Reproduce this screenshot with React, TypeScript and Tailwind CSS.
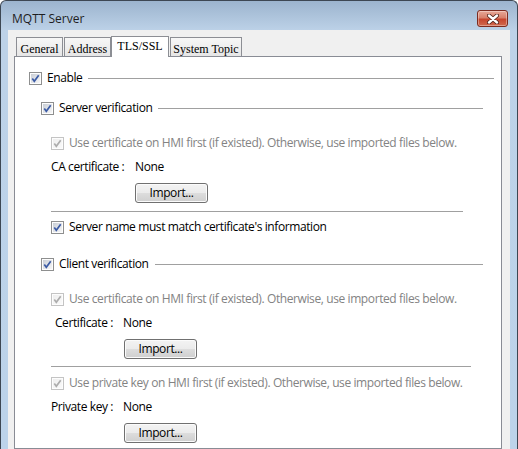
import React from "react";

const UI = "[font-family:'Open_Sans',sans-serif]";
const SERIF = "[font-family:'Liberation_Serif',serif]";

function CheckBox({ disabled = false }: { disabled?: boolean }) {
  const id = disabled ? "cbd" : "cbe";
  return (
    <svg width="13" height="13" viewBox="0 0 13 13" className="shrink-0 block">
      <defs>
        <linearGradient id={id + "g"} x1="0" y1="0" x2="1" y2="1">
          <stop offset="0" stopColor={disabled ? "#eeeeee" : "#c9ced6"} />
          <stop offset="1" stopColor={disabled ? "#fafafa" : "#f7f7f7"} />
        </linearGradient>
      </defs>
      <rect x="0.5" y="0.5" width="12" height="12" fill="#fdfdfd" stroke={disabled ? "#c4c4c4" : "#8e8f8f"} />
      <rect x="2" y="2" width="9" height="9" fill={`url(#${id}g)`} />
      <path
        d="M3.3 6.6 L5.3 9.3 L9.7 3.3"
        fill="none"
        stroke={disabled ? "#acacac" : "#3b5ba5"}
        strokeWidth="1.7"
      />
    </svg>
  );
}

function ImportButton() {
  return (
    <div className="w-[73px] h-[20px] rounded-[3px] border border-[#707070] bg-[linear-gradient(#f3f3f3_0%,#ebebeb_50%,#dddddd_51%,#cfcfcf_100%)] shadow-[inset_0_0_0_1px_#fbfbfb] flex items-center justify-center text-[12px] leading-[16px] text-black">
      Import...
    </div>
  );
}

function Line({ className = "" }: { className?: string }) {
  return <div className={`h-px bg-[#a0a0a0] ${className}`} />;
}

function Tab({ label, selected = false, className = "" }: { label: string; selected?: boolean; className?: string }) {
  if (selected) {
    return (
      <div
        className={`h-[21px] border border-b-0 border-[#8c8e94] bg-white flex justify-center pt-[3px] text-[12px] leading-[12px] text-black ${SERIF} ${className}`}
      >
        {label}
      </div>
    );
  }
  return (
    <div
      className={`h-[19px] mb-px border border-b-0 border-[#8c8e94] bg-[linear-gradient(#f7f7f7,#e6e6e6)] flex justify-center pt-[5px] text-[12px] leading-[12px] text-black ${SERIF} ${className}`}
    >
      {label}
    </div>
  );
}

export default function App() {
  return (
    <div className={`w-[518px] h-[449px] overflow-hidden ${UI}`}>
      <div className="w-full h-full flex flex-col rounded-t-[6px] border border-b-0 border-[#3d4753] bg-[linear-gradient(#9cb4ce_0px,#bdd2e8_30px,#bcd3ea_100%)]">
        {/* title bar */}
        <div className="h-[29px] shrink-0 flex items-start">
          <div className="ml-[11px] mt-[10px] text-[12px] leading-[16px] text-[#1e1e1e]">MQTT Server</div>
          <div className="ml-auto mr-[9px] mt-[9px] w-[31px] h-[17px] rounded-[3px] border border-[#7c2b20] bg-[linear-gradient(#e7a898_0%,#d8806b_45%,#c7452e_55%,#d06a4f_100%)] shadow-[inset_0_0_0_1px_rgba(255,255,255,0.35)] flex items-center justify-center">
            <svg width="12" height="10" viewBox="0 0 12 10" className="block">
              <path d="M2 1.5 L10 8.5 M10 1.5 L2 8.5" stroke="#4a1c15" strokeWidth="4" strokeLinecap="round" />
              <path d="M2 1.5 L10 8.5 M10 1.5 L2 8.5" stroke="#ffffff" strokeWidth="2.4" strokeLinecap="round" />
            </svg>
          </div>
        </div>

        {/* client area */}
        <div className="flex-1 mx-[7px] bg-[#f0f0f0] pt-[6px] pl-[6px] pr-[8px] flex flex-col overflow-hidden">
          {/* tabs */}
          <div className="h-[21px] -mb-px relative z-10 flex items-end shrink-0">
            <Tab label="General" className="ml-[2px] w-[47px]" />
            <Tab label="Address" className="ml-px w-[47px]" />
            <Tab label="TLS/SSL" selected className="w-[58px]" />
            <Tab label="System Topic" className="ml-px w-[72px]" />
          </div>

          {/* panel */}
          <div className="flex-1 border border-[#898c95] bg-white flex flex-col text-[12px] leading-[16px] tracking-[-0.4px] text-black">
            {/* Enable */}
            <div className="mt-[11px] h-[20px] flex items-center pl-[14px] pr-[7px] gap-[5px]">
              <CheckBox />
              <span>Enable</span>
              <Line className="flex-1 ml-[1px]" />
            </div>

            {/* Server verification */}
            <div className="mt-[10px] h-[20px] flex items-center pl-[26px] pr-[18px] gap-[5px]">
              <CheckBox />
              <span>Server verification</span>
              <Line className="flex-1 ml-[1px]" />
            </div>

            <div className="mt-[15px] h-[20px] flex items-center pl-[36px] gap-[5px] text-[#838383]">
              <CheckBox disabled />
              <span>Use certificate on HMI first (if existed). Otherwise, use imported files below.</span>
            </div>

            <div className="mt-[4px] h-[20px] flex items-center pl-[36px]">
              <span className="w-[74px] whitespace-nowrap">CA certificate :</span>
              <span className="ml-[10px]">None</span>
            </div>

            <div className="mt-[6px] pl-[120px] flex">
              <ImportButton />
            </div>

            <Line className="mt-[8px] ml-[36px] mr-[38px]" />

            <div className="mt-[5px] h-[20px] flex items-center pl-[36px] gap-[5px]">
              <CheckBox />
              <span>Server name must match certificate's information</span>
            </div>

            {/* Client verification */}
            <div className="mt-[17px] h-[20px] flex items-center pl-[26px] pr-[18px] gap-[5px]">
              <CheckBox />
              <span>Client verification</span>
              <Line className="flex-1 ml-[1px]" />
            </div>

            <div className="mt-[15px] h-[20px] flex items-center pl-[36px] gap-[5px] text-[#838383]">
              <CheckBox disabled />
              <span>Use certificate on HMI first (if existed). Otherwise, use imported files below.</span>
            </div>

            <div className="mt-[4px] h-[20px] flex items-center pl-[36px]">
              <span className="w-[62px] text-right whitespace-nowrap">Certificate :</span>
              <span className="ml-[10px]">None</span>
            </div>

            <div className="mt-[6px] pl-[109px] flex">
              <ImportButton />
            </div>

            <Line className="mt-[7px] ml-[36px] mr-[30px]" />

            <div className="mt-[6px] h-[20px] flex items-center pl-[36px] gap-[5px] text-[#838383]">
              <CheckBox disabled />
              <span>Use private key on HMI first (if existed). Otherwise, use imported files below.</span>
            </div>

            <div className="mt-[4px] h-[20px] flex items-center pl-[36px]">
              <span className="w-[62px] text-right whitespace-nowrap">Private key :</span>
              <span className="ml-[10px]">None</span>
            </div>

            <div className="mt-[6px] pl-[109px] flex">
              <ImportButton />
            </div>
          </div>
        </div>
      </div>
    </div>
  );
}
